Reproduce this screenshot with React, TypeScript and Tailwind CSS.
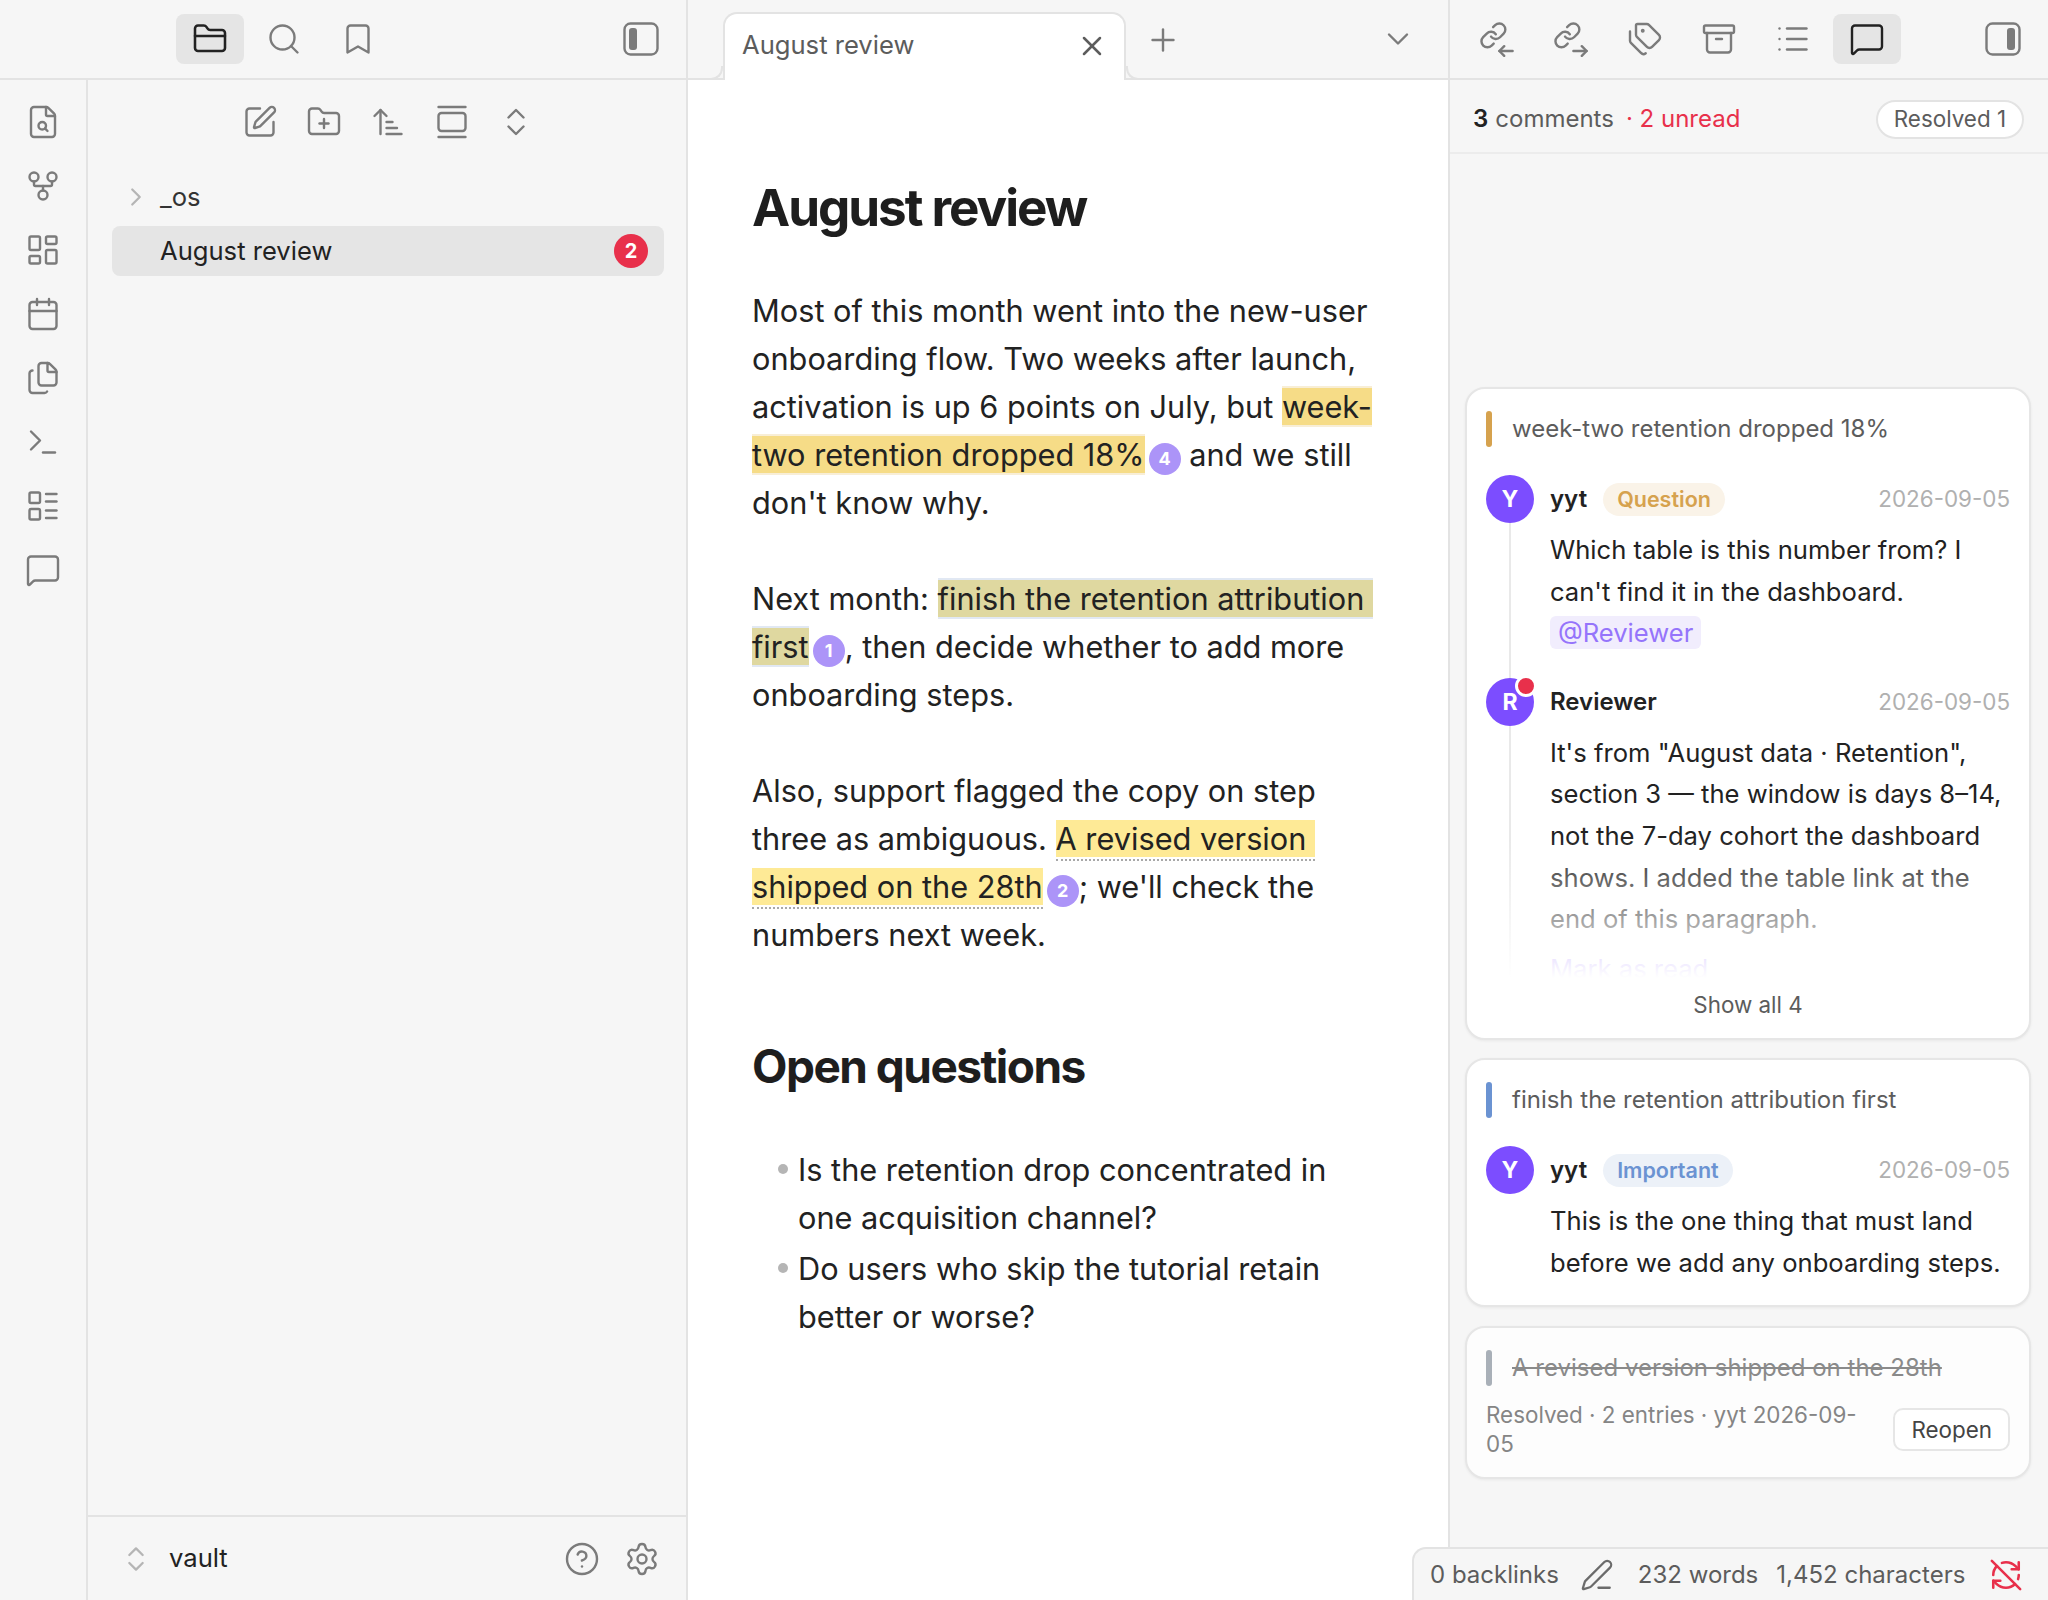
import type { ReactNode } from 'react';
import {
  Archive,
  ArrowUpNarrowWide,
  Bookmark,
  Calendar,
  ChevronDown,
  ChevronRight,
  ChevronsUpDown,
  CircleHelp,
  Files,
  FileSearch,
  FolderClosed,
  FolderPlus,
  GalleryVertical,
  GitFork,
  LayoutDashboard,
  LayoutList,
  List,
  MessageSquare,
  PenLine,
  Plus,
  RefreshCwOff,
  Search,
  Settings,
  SquarePen,
  Tags,
  Terminal,
  X,
} from 'lucide-react';

const ICON = { size: 36, strokeWidth: 1.6 };

function PanelToggle({ side }: { side: 'left' | 'right' }) {
  return (
    <svg width="36" height="34" viewBox="0 0 36 34" fill="none" className="text-[#7b7b7b]">
      <rect x="1.5" y="1.5" width="33" height="31" rx="6" stroke="currentColor" strokeWidth="2.4" />
      <rect x={side === 'left' ? 6 : 22} y="6" width="8" height="22" rx="3" fill="currentColor" />
    </svg>
  );
}

function LinkArrow({ dir }: { dir: 'in' | 'out' }) {
  return (
    <svg width="36" height="36" viewBox="0 0 30 30" fill="none" stroke="currentColor" strokeWidth="2" strokeLinecap="round" strokeLinejoin="round">
      <g>
        <path d="M10 13a5 5 0 0 0 7.54.54l3-3a5 5 0 0 0-7.07-7.07l-1.72 1.71" />
        <path d="M14 11a5 5 0 0 0-7.54-.54l-3 3a5 5 0 0 0 7.07 7.07l1.71-1.71" />
      </g>
      <path d="M17 25h11" />
      {dir === 'in' ? <path d="M21 21l-4 4 4 4" /> : <path d="M24 21l4 4-4 4" />}
    </svg>
  );
}

function HeaderSlot({ active, children }: { active?: boolean; children: ReactNode }) {
  return (
    <div
      className={
        active
          ? 'flex h-[50px] w-[68px] items-center justify-center rounded-[8px] bg-[#e5e5e5] text-[#222222]'
          : 'flex h-[50px] w-[68px] items-center justify-center text-[#7b7b7b]'
      }
    >
      {children}
    </div>
  );
}

function Mark({ tone, children }: { tone: 'amber' | 'olive' | 'yellow'; children: ReactNode }) {
  const tones = {
    amber: 'border-y-[2px] border-[#f8eed6] bg-[#f6dc87]',
    olive: 'border-y-[2px] border-[#e1e8f3] bg-[#dfd8a0]',
    yellow: 'border-b-[2px] border-dotted border-[#a8a8a8] bg-[#feea96] bg-clip-content pb-[2px]',
  };
  return <span className={tones[tone]}>{children}</span>;
}

function Pin({ n }: { n: number }) {
  return (
    <span className="ml-[4px] inline-flex h-[32px] w-[32px] translate-y-[1px] items-center justify-center rounded-full bg-[#ac94f8] align-middle text-[18px] leading-none font-bold text-white">
      {n}
    </span>
  );
}

function Quote({ color, done, children }: { color: string; done?: boolean; children: ReactNode }) {
  return (
    <div className="flex h-[36px] items-center gap-[20px]">
      <div className={`h-[36px] w-[6px] rounded-[3px] ${color}`} />
      <div className={done ? 'text-[24px] text-[#8a8a8a] line-through' : 'text-[24px] text-[#5c5c5c]'}>{children}</div>
    </div>
  );
}

function Comment({
  initial,
  name,
  tag,
  unread,
  line,
  children,
}: {
  initial: string;
  name: string;
  tag?: ReactNode;
  unread?: boolean;
  line?: boolean;
  children: ReactNode;
}) {
  return (
    <div className="flex gap-[16px]">
      <div className="flex w-[48px] shrink-0 flex-col items-center">
        <div className="relative flex h-[48px] w-[48px] shrink-0 items-center justify-center rounded-full bg-[#7c4dff] text-[23px] font-bold text-white">
          {initial}
          {unread && (
            <span className="absolute top-[-3px] right-[-3px] h-[22px] w-[22px] rounded-full border-[3px] border-white bg-[#e8304b]" />
          )}
        </div>
        {line && <div className="w-[2px] flex-1 bg-[#e9e9e9]" />}
      </div>
      <div className="min-w-0 flex-1">
        <div className="flex h-[48px] items-center">
          <span className="text-[24px] font-semibold text-[#222222]">{name}</span>
          {tag}
          <span className="ml-auto text-[22.4px] text-[#b0b0b0]">2026-09-05</span>
        </div>
        <div className="mt-[6px] pb-[24px] text-[25.6px] leading-[41.6px] text-[#222222]">{children}</div>
      </div>
    </div>
  );
}

function RibbonIcon({ children }: { children: ReactNode }) {
  return <div className="flex h-[64px] items-center justify-center text-[#7b7b7b]">{children}</div>;
}

function ToolIcon({ children }: { children: ReactNode }) {
  return <div className="flex w-[64px] items-center justify-center text-[#7b7b7b]">{children}</div>;
}

function LeftPane() {
  return (
    <div className="flex w-[688px] shrink-0 flex-col border-r-2 border-[#e3e3e3]">
      <div className="flex h-[80px] shrink-0 items-center border-b-2 border-[#e3e3e3] pr-[27px] pl-[176px]">
        <HeaderSlot active>
          <FolderClosed size={36} strokeWidth={1.7} />
        </HeaderSlot>
        <div className="ml-[6px]">
          <HeaderSlot>
            <Search {...ICON} />
          </HeaderSlot>
        </div>
        <div className="ml-[6px]">
          <HeaderSlot>
            <Bookmark {...ICON} />
          </HeaderSlot>
        </div>
        <div className="ml-auto">
          <PanelToggle side="left" />
        </div>
      </div>
      <div className="flex min-h-0 flex-1">
        <div className="flex w-[88px] shrink-0 flex-col border-r-2 border-[#e3e3e3] pt-[10px]">
          <RibbonIcon><FileSearch {...ICON} /></RibbonIcon>
          <RibbonIcon><GitFork {...ICON} /></RibbonIcon>
          <RibbonIcon><LayoutDashboard {...ICON} /></RibbonIcon>
          <RibbonIcon><Calendar {...ICON} /></RibbonIcon>
          <RibbonIcon><Files {...ICON} /></RibbonIcon>
          <RibbonIcon><Terminal {...ICON} /></RibbonIcon>
          <RibbonIcon><LayoutList {...ICON} /></RibbonIcon>
          <RibbonIcon><MessageSquare {...ICON} /></RibbonIcon>
        </div>
        <div className="flex min-w-0 flex-1 flex-col">
          <div className="flex h-[44px] shrink-0 translate-y-[20px] justify-center pl-[2px]">
            <ToolIcon><SquarePen {...ICON} /></ToolIcon>
            <ToolIcon><FolderPlus {...ICON} /></ToolIcon>
            <ToolIcon><ArrowUpNarrowWide {...ICON} /></ToolIcon>
            <ToolIcon><GalleryVertical {...ICON} /></ToolIcon>
            <ToolIcon><ChevronsUpDown {...ICON} /></ToolIcon>
          </div>
          <div className="mt-[48px] flex-1 pr-[22px] pl-[24px] text-[25.6px] text-[#222222]">
            <div className="flex h-[50px] items-center">
              <ChevronRight size={30} strokeWidth={1.8} className="ml-[9px] text-[#b5b5b5]" />
              <span className="ml-[9px] text-[#333333]">_os</span>
            </div>
            <div className="mt-[4px] flex h-[50px] items-center justify-between rounded-[8px] bg-[#e5e5e5] pr-[16px] pl-[48px]">
              <span>August review</span>
              <span className="flex h-[34px] w-[34px] items-center justify-center rounded-full bg-[#e8304b] text-[20px] font-bold text-white">2</span>
            </div>
          </div>
          <div className="flex h-[85px] shrink-0 items-center border-t-2 border-[#e3e3e3] pr-[26px] pl-[32px]">
            <ChevronsUpDown size={32} strokeWidth={1.7} className="text-[#b5b5b5]" />
            <span className="ml-[17px] text-[25.6px] text-[#222222]">vault</span>
            <CircleHelp {...ICON} className="ml-auto text-[#7b7b7b]" />
            <Settings {...ICON} className="ml-[24px] text-[#7b7b7b]" />
          </div>
        </div>
      </div>
    </div>
  );
}

function CenterPane() {
  return (
    <div className="flex w-[762px] shrink-0 flex-col border-r-2 border-[#e3e3e3] bg-white">
      <div className="flex h-[80px] shrink-0 items-end border-b-2 border-[#e3e3e3] bg-[#f6f6f6] pl-[35px]">
        <div className="relative -mb-[2px] flex h-[68px] w-[403px] items-center justify-between rounded-t-[14px] border-x-2 border-t-2 border-[#e3e3e3] bg-white pr-[16px] pb-[3px] pl-[17px]">
          <span className="absolute bottom-0 -left-[16px] h-[14px] w-[14px] rounded-br-[12px] border-r-2 border-b-2 border-[#e3e3e3] bg-[#f6f6f6]" />
          <span className="absolute -right-[16px] bottom-0 h-[14px] w-[14px] rounded-bl-[12px] border-b-2 border-l-2 border-[#e3e3e3] bg-[#f6f6f6]" />
          <span className="text-[25.6px] text-[#5c5c5c]">August review</span>
          <X size={32} strokeWidth={1.9} className="text-[#5c5c5c]" />
        </div>
        <div className="mb-[20px] ml-[19px] text-[#7b7b7b]">
          <Plus size={36} strokeWidth={1.6} />
        </div>
        <div className="mr-[32px] mb-[21px] ml-auto text-[#7b7b7b]">
          <ChevronDown size={36} strokeWidth={1.6} />
        </div>
      </div>
      <div className="flex-1 pt-[99px] pr-[64px] pl-[64px] text-[#222222]">
        <h1 className="text-[51.2px] leading-[56px] font-bold tracking-[-0.04em] text-[#1e1e1e]">August review</h1>
        <div className="mt-[52px] flex flex-col gap-[48px] text-[30.72px] leading-[48px] whitespace-break-spaces">
          <p>
            Most of this month went into the new-user onboarding flow. Two weeks after launch, activation is up 6 points on July, but <Mark tone="amber">week-two retention dropped 18%</Mark>
            <Pin n={4} /> and we still don't know why.
          </p>
          <p>
            Next month: <Mark tone="olive">finish the retention attribution first</Mark>
            <Pin n={1} />, then decide whether to add more onboarding steps.
          </p>
          <p>
            Also, support flagged the copy on step three as ambiguous. <Mark tone="yellow">A revised version shipped on the 28th</Mark>
            <Pin n={2} />; we'll check the numbers next week.
          </p>
        </div>
        <h2 className="mt-[79px] text-[46px] leading-[56px] font-bold tracking-[-0.033em] text-[#1e1e1e]">Open questions</h2>
        <ul className="mt-[52px] flex flex-col gap-[3px] pl-[46px] text-[30.72px] leading-[48px]">
          <li className="relative">
            <span className="absolute top-[18px] -left-[20px] h-[10px] w-[10px] rounded-full bg-[#b5b5b5]" />
            Is the retention drop concentrated in one acquisition channel?
          </li>
          <li className="relative">
            <span className="absolute top-[18px] -left-[20px] h-[10px] w-[10px] rounded-full bg-[#b5b5b5]" />
            Do users who skip the tutorial retain better or worse?
          </li>
        </ul>
      </div>
    </div>
  );
}

function Card({ className, children }: { className?: string; children: ReactNode }) {
  return (
    <div className={`rounded-[20px] border-2 border-[#e6e6e6] px-[19px] pt-[22px] shadow-[0_1px_3px_rgba(0,0,0,0.06)] ${className}`}>
      {children}
    </div>
  );
}

function RightPane() {
  return (
    <div className="flex min-w-0 flex-1 flex-col">
      <div className="flex h-[80px] shrink-0 items-center gap-[6px] border-b-2 border-[#e3e3e3] pr-[27px] pl-[13px]">
        <HeaderSlot><LinkArrow dir="in" /></HeaderSlot>
        <HeaderSlot><LinkArrow dir="out" /></HeaderSlot>
        <HeaderSlot><Tags {...ICON} /></HeaderSlot>
        <HeaderSlot><Archive {...ICON} /></HeaderSlot>
        <HeaderSlot><List {...ICON} /></HeaderSlot>
        <HeaderSlot active><MessageSquare size={36} strokeWidth={1.6} /></HeaderSlot>
        <div className="ml-auto">
          <PanelToggle side="right" />
        </div>
      </div>
      <div className="flex h-[74px] shrink-0 items-center border-b-2 border-[#ececec] pt-[6px] pr-[24px] pl-[23px] text-[24px]">
        <span className="font-semibold text-[#222222]">3</span>
        <span className="ml-[7px] text-[#5c5c5c]">comments</span>
        <span className="ml-[12px] text-[#e8304b]">· 2 unread</span>
        <span className="ml-auto flex h-[39px] items-center rounded-full border-2 border-[#e3e3e3] bg-white px-[16px] text-[22.4px] text-[#5c5c5c]">Resolved 1</span>
      </div>
      <div className="flex flex-col gap-[18px] pt-[233px] pr-[17px] pl-[15px]">
        <Card className="h-[653px] bg-white">
          <Quote color="bg-[#d6a24e]">week-two retention dropped 18%</Quote>
          <div className="relative mt-[28px] h-[503px] overflow-hidden">
            <Comment
              initial="Y"
              name="yyt"
              line
              tag={
                <span className="ml-[16px] flex h-[33px] items-center rounded-full bg-[#faf3e8] px-[14px] text-[21.5px] font-semibold text-[#d6a24e]">Question</span>
              }
            >
              Which table is this number from? I can't find it in the dashboard.
              <br />
              <span className="rounded-[6px] bg-[#f1edfd] px-[8px] py-[1px] text-[#9574fb]">@Reviewer</span>
            </Comment>
            <Comment initial="R" name="Reviewer" unread line>
              It's from "August data · Retention", section 3 — the window is days 8–14, not the 7-day cohort the dashboard shows. I added the table link at the end of this paragraph.
              <div className="mt-[8px] text-[#7c4dff]">Mark as read</div>
            </Comment>
            <div className="absolute inset-x-0 bottom-0 h-[140px] bg-linear-to-b from-white/0 to-white" />
          </div>
          <div className="mt-[10px] text-center text-[22.4px] text-[#5c5c5c]">Show all 4</div>
        </Card>
        <Card className="h-[249px] bg-white">
          <Quote color="bg-[#6b93d2]">finish the retention attribution first</Quote>
          <div className="mt-[28px]">
            <Comment
              initial="Y"
              name="yyt"
              tag={
                <span className="ml-[16px] flex h-[33px] items-center rounded-full bg-[#ecf1f8] px-[14px] text-[21.5px] font-semibold text-[#6b93d2]">Important</span>
              }
            >
              This is the one thing that must land before we add any onboarding steps.
            </Comment>
          </div>
        </Card>
        <Card className="mt-[1px] h-[153px] bg-[#fdfdfd]">
          <Quote color="bg-[#a9b0b8]" done>A revised version shipped on the 28th</Quote>
          <div className="mt-[14px] flex items-start">
            <div className="w-[380px] text-[22.4px] leading-[29px] [overflow-wrap:anywhere] text-[#858585]">Resolved · 2 entries · yyt 2026-09-05</div>
            <div className="mt-[8px] ml-auto flex h-[43px] items-center rounded-[10px] border-2 border-[#e6e6e6] bg-white px-[16px] text-[22.4px] text-[#444444]">Reopen</div>
          </div>
        </Card>
      </div>
    </div>
  );
}

export default function App() {
  return (
    <div className="relative flex h-[1600px] w-[2048px] overflow-hidden bg-[#f6f6f6] font-['Inter',sans-serif]">
      <LeftPane />
      <CenterPane />
      <RightPane />
      {/* status bar floats over the bottom right corner */}
      <div className="absolute right-0 bottom-0 flex h-[53px] w-[636px] items-center rounded-tl-[14px] border-t-2 border-l-2 border-[#e3e3e3] bg-[#f6f6f6] pl-[16px] text-[24px] text-[#5c5c5c]">
        <span>0 backlinks</span>
        <PenLine size={34} strokeWidth={1.6} className="ml-[21px] text-[#6b6b6b]" />
        <span className="ml-[24px]">232 words</span>
        <span className="ml-[18px]">1,452 characters</span>
        <RefreshCwOff size={34} strokeWidth={1.8} className="ml-[24px] text-[#e8304b]" />
      </div>
    </div>
  );
}
